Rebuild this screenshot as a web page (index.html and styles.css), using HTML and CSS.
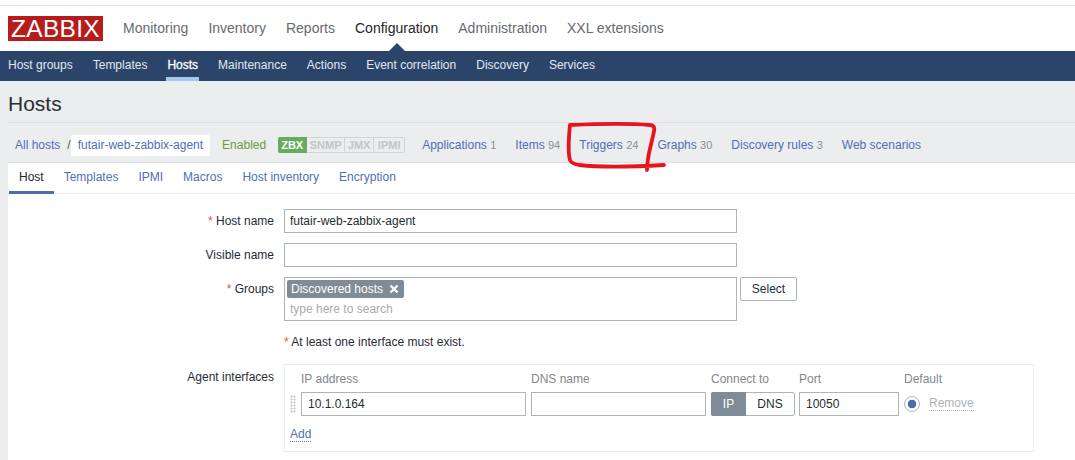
FILE: index.html
```html
<!DOCTYPE html>
<html lang="en">

<head>
    <meta charset="UTF-8">
    <title>Hosts</title>
    <link rel="stylesheet" href="styles.css">
</head>

<body>
    <header class="top">
        <div class="logo">ZABBIX</div>
        <nav class="main-nav">
            <a href="#">Monitoring</a>
            <a href="#">Inventory</a>
            <a href="#">Reports</a>
            <a href="#" class="current">Configuration</a>
            <a href="#">Administration</a>
            <a href="#">XXL extensions</a>
        </nav>
    </header>
    <nav class="sub-nav">
        <a href="#">Host groups</a>
        <a href="#">Templates</a>
        <a href="#" class="current">Hosts</a>
        <a href="#">Maintenance</a>
        <a href="#">Actions</a>
        <a href="#">Event correlation</a>
        <a href="#">Discovery</a>
        <a href="#">Services</a>
    </nav>
    <main class="page">
        <h1>Hosts</h1>
        <div class="crumbs">
            <a href="#" class="all">All hosts</a>
            <span class="slash">/</span>
            <a href="#" class="host-tag">futair-web-zabbix-agent</a>
            <span class="enabled">Enabled</span>
            <div class="avail">
                <span class="on">ZBX</span><span class="w-snmp">SNMP</span><span class="w-jmx">JMX</span><span class="w-ipmi">IPMI</span>
            </div>
            <a href="#" class="link">Applications <small>1</small></a>
            <a href="#" class="link">Items <small>94</small></a>
            <a href="#" class="link">Triggers <small>24</small></a>
            <a href="#" class="link">Graphs <small>30</small></a>
            <a href="#" class="link">Discovery rules <small>3</small></a>
            <a href="#" class="link">Web scenarios</a>
        </div>
        <section class="panel">
            <div class="tabs">
                <a href="#" class="current">Host</a>
                <a href="#">Templates</a>
                <a href="#">IPMI</a>
                <a href="#">Macros</a>
                <a href="#">Host inventory</a>
                <a href="#">Encryption</a>
            </div>
            <form class="form">
                <div class="row">
                    <label><i>*</i> Host name</label>
                    <input class="field" type="text" value="futair-web-zabbix-agent">
                </div>
                <div class="row">
                    <label>Visible name</label>
                    <input class="field" type="text">
                </div>
                <div class="row">
                    <label><i>*</i> Groups</label>
                    <div class="multi">
                        <span class="chip">Discovered hosts
                            <svg width="10" height="10" viewBox="0 0 10 10"><path d="M1.5 1.5l7 7M8.5 1.5l-7 7" stroke="#fff" stroke-width="2.4"/></svg>
                        </span>
                        <span class="hint">type here to search</span>
                    </div>
                    <button type="button" class="select">Select</button>
                </div>
                <div class="row note-row">
                    <label></label>
                    <span><i>*</i> At least one interface must exist.</span>
                </div>
                <div class="row iface-row">
                    <label>Agent interfaces</label>
                    <div class="iface">
                        <div class="iface-grid">
                            <span class="head">IP address</span>
                            <span class="head">DNS name</span>
                            <span class="head">Connect to</span>
                            <span class="head">Port</span>
                            <span class="head">Default</span>
                            <input class="small-field" type="text" value="10.1.0.164">
                            <input class="small-field" type="text">
                            <div class="toggle"><span class="on">IP</span><span>DNS</span></div>
                            <input class="small-field" type="text" value="10050">
                            <div class="default-cell">
                                <span class="radio"></span>
                                <a href="#" class="remove">Remove</a>
                            </div>
                        </div>
                        <span class="handle"></span>
                        <a href="#" class="add">Add</a>
                    </div>
                </div>
            </form>
        </section>
    </main>
    <!-- hand drawn red box around Triggers -->
    <svg class="scribble" width="110" height="54" viewBox="0 0 110 54">
        <path d="M7 4C6 14 5 32 7 39c1 3 4 4 9 5 18 2 50 2 85 0M7 4c24-1 56-2 80 0 3 0 5 2 4 6-2 12-7 24-7 39" fill="none" stroke="#e8141c" stroke-width="3.8" stroke-linecap="round" stroke-linejoin="round"/>
    </svg>
</body>

</html>
```
FILE: styles.css
```css
* {
    box-sizing: border-box;
}

body {
    margin: 0;
    height: 460px;
    overflow: hidden;
    background: #fff;
    font-family: "Liberation Sans", Arial, sans-serif;
    font-size: 12px;
    color: #1f2c33;
}

a {
    text-decoration: none;
    color: #4f6fb5;
}

.top {
    display: flex;
    align-items: flex-start;
    height: 46px;
    margin-top: 5px;
    border-top: 1px solid #dfe0e0;
    padding: 10px 0 0 8px;
}

.logo {
    width: 95px;
    height: 25px;
    background: #b71c1c;
    color: #fff;
    font-size: 24.5px;
    line-height: 26px;
    text-align: center;
    letter-spacing: 0.3px;
}

.main-nav {
    display: flex;
    gap: 20px;
    margin-left: 20px;
}

.main-nav a {
    position: relative;
    font-size: 14px;
    line-height: 24px;
    color: #69696f;
}

.main-nav a.current {
    color: #24262b;
}

.main-nav a.current::after {
    content: "";
    position: absolute;
    left: 50%;
    top: 27px;
    margin-left: -8px;
    border: 8px solid transparent;
    border-top: 0;
    border-bottom-color: #2b4469;
}

.sub-nav {
    display: flex;
    gap: 20px;
    height: 30px;
    padding-left: 8px;
    background: #2b4469;
}

.sub-nav a {
    color: #e4e8ee;
    line-height: 29px;
}

.sub-nav a.current {
    color: #fff;
    padding: 0 1px;
    margin: 0 -1px;
    -webkit-text-stroke: 0.3px #fff;
    border-bottom: 4px solid #a3c7ee;
}

.page {
    height: 379px;
    padding-left: 8px;
    background: #ebedef;
}

h1 {
    margin: 0;
    height: 42px;
    border-bottom: 1px solid #dde0e2;
    font-size: 21px;
    font-weight: normal;
    line-height: 46px;
    color: #2b2f33;
}

.crumbs {
    display: flex;
    align-items: center;
    height: 40px;
    border-bottom: 1px solid #dde0e2;
    padding: 5px 0 0 7px;
}

.crumbs .all {
    margin-right: 7px;
}

.slash {
    margin-right: 0;
    color: #555;
}

.host-tag {
    height: 21px;
    line-height: 20px;
    padding: 0 7px;
    background: #fff;
    border-radius: 2px;
}

.enabled {
    margin-left: 12px;
    color: #6a9c3c;
}

.avail {
    display: flex;
    margin: 0 17px 0 12px;
    height: 16px;
    font-size: 11px;
    font-weight: bold;
    line-height: 14px;
    color: #c2c5c7;
}

.avail span {
    border: 1px solid #d2d5d7;
    border-left: 0;
    text-align: center;
}

.avail .on {
    width: 29px;
    background: #64ac5e;
    border-color: #64ac5e;
    color: #fff;
    border-radius: 2px 0 0 2px;
}

.avail .w-snmp {
    width: 38px;
}

.avail .w-jmx {
    width: 29px;
}

.avail .w-ipmi {
    width: 31px;
    border-radius: 0 2px 2px 0;
}

.link {
    margin-right: 19px;
}

.link small {
    font-size: 11px;
    color: #8a8f93;
}

.panel {
    height: 297px;
    background: #fff;
}

.tabs {
    display: flex;
    height: 31px;
    border-bottom: 1px solid #ebedef;
    padding-left: 1px;
}

.tabs a {
    padding: 0 10px;
    line-height: 29px;
}

.tabs a.current {
    color: #24262b;
    border-bottom: 3px solid #4a6fb0;
    margin-bottom: -1px;
}

.form {
    padding-top: 15px;
}

.row {
    display: flex;
    align-items: flex-start;
    margin-bottom: 10px;
}

.row label {
    flex: none;
    width: 266px;
    margin-right: 10px;
    text-align: right;
    line-height: 24px;
}

i {
    font-style: normal;
    color: #d9534f;
}

.field {
    width: 453px;
    height: 24px;
    border: 1px solid #adb5ba;
    padding: 0 5px;
    font: inherit;
    color: inherit;
}

.multi {
    display: flex;
    flex-direction: column;
    align-items: flex-start;
    width: 453px;
    height: 44px;
    border: 1px solid #adb5ba;
    padding: 2px;
}

.chip {
    display: flex;
    align-items: center;
    gap: 6px;
    height: 18px;
    padding: 0 5px 0 4px;
    border-radius: 2px;
    background: #7f8c97;
    color: #fff;
}

.hint {
    margin: 4px 0 0 3px;
    color: #a7abae;
}

.select {
    width: 57px;
    height: 24px;
    margin-left: 3px;
    padding: 0;
    border: 1px solid #adb5ba;
    border-radius: 2px;
    background: #fff;
    font: inherit;
    color: inherit;
}

.note-row {
    margin: 14px 0 15px;
    line-height: 14px;
}

.iface-row label {
    line-height: 14px;
    padding-top: 6px;
}

.iface {
    position: relative;
    width: 750px;
    height: 88px;
    border: 1px solid #ebedef;
    padding: 6px 0 0 5px;
}

.iface-grid {
    display: grid;
    grid-template-columns: 225px 175px 83px 100px 1fr;
    grid-template-rows: 18px 24px;
    margin-left: 11px;
    column-gap: 5px;
    row-gap: 3px;
}

.head {
    color: #83878b;
    line-height: 14px;
    padding-top: 1px;
}

.small-field {
    width: 100%;
    height: 24px;
    border: 1px solid #adb5ba;
    padding: 0 6px;
    font: inherit;
    color: inherit;
}

.toggle {
    display: flex;
    width: 84px;
    height: 24px;
    border: 1px solid #adb5ba;
    border-radius: 2px;
    line-height: 22px;
    text-align: center;
}

.toggle span {
    flex: 1;
}

.toggle .on {
    flex: none;
    width: 35px;
    margin: -1px 0 -1px -1px;
    line-height: 24px;
    background: #7f8c97;
    color: #fff;
    border-radius: 2px 0 0 2px;
}

.default-cell {
    display: flex;
    align-items: center;
    gap: 9px;
}

.radio {
    width: 16px;
    height: 16px;
    border: 1px solid #adb5ba;
    border-radius: 50%;
    background: radial-gradient(circle, #4a6fb0 0 4px, #fff 4.6px);
}

.remove {
    color: #adb2b6;
    border-bottom: 1px dotted #adb2b6;
    line-height: 13px;
}

.handle {
    position: absolute;
    left: 5px;
    top: 30px;
    width: 6px;
    height: 18px;
    background: radial-gradient(circle, #d5d8da 1px, transparent 1.2px) 0 0 / 3px 3px;
}

.add {
    display: inline-block;
    margin-top: 12px;
    border-bottom: 1px dotted #4f6fb5;
    line-height: 13px;
}

.scribble {
    position: absolute;
    left: 563px;
    top: 121px;
}
```
